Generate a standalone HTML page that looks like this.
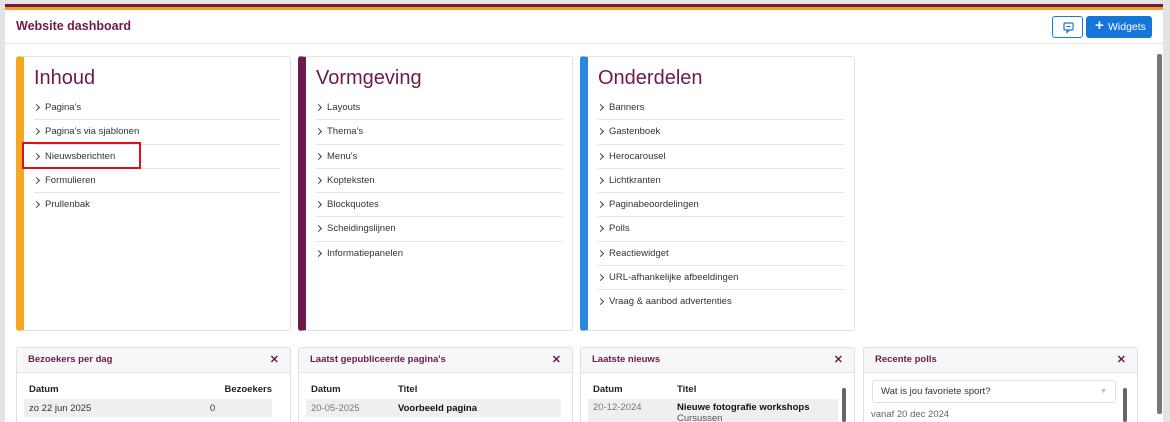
<!DOCTYPE html>
<html style="overflow:hidden;width:1170px;height:422px"><head><style>
*{box-sizing:border-box;margin:0;padding:0}
body{width:1170px;height:422px;overflow:hidden;background:#e4e4e4;font-family:"Liberation Sans",sans-serif;position:relative}
.panel{position:absolute;left:5px;top:4px;width:1158px;height:418px;background:#fff;overflow:hidden}
.s1{position:absolute;left:0;top:0;width:1158px;height:3px;background:#6e1a4a}
.s2{position:absolute;left:0;top:3px;width:1158px;height:3px;background:#f5a020}
.hdr{position:absolute;left:0;top:6px;width:1158px;height:34px;border-bottom:1px solid #e2e2e2}
.hdr h1{position:absolute;left:11px;top:9px;font-size:12.5px;color:#6e1a4a;font-weight:bold}
.b1{position:absolute;left:1047px;top:6px;width:31px;height:22px;border:1px solid #1a7ad9;border-radius:3px;background:#fff}
.b2{position:absolute;left:1081px;top:6px;width:66px;height:22px;border-radius:3px;background:#1476d9;color:#fff;font-size:10.5px;line-height:22px;padding-left:22px}
.b2:before{content:"+";position:absolute;left:9px;top:-1px;font-size:15px;font-weight:bold}
.card{position:absolute;top:56px;width:275px;height:275px;border:1px solid #e2e2e2;border-left:8px solid;border-radius:3px;background:#fff}
.card h2{font-weight:normal;font-size:20px;color:#6e1a4a;margin:10px 0 0 10px;height:29px}
.card ul{list-style:none;margin:0 10px 0 10px}
.card li{font-size:9.5px;color:#333;height:24.3px;line-height:24px;border-bottom:1px solid #e4e4e4;padding-left:11px;position:relative}
.card li:last-child{border-bottom:none}
.card li:before{content:"";position:absolute;left:0;top:9px;width:4px;height:4px;border-right:1px solid #444;border-top:1px solid #444;transform:rotate(45deg)}
.w{position:absolute;top:347px;width:275px;height:75px;border:1px solid #e0e0e0;border-bottom:none;border-radius:3px 3px 0 0;background:#fff;overflow:hidden}
.wh{height:25px;background:#f7f7f7;border-bottom:1px solid #e4e4e4;font-size:9.5px;color:#6e1a4a;font-weight:bold;line-height:24px;padding-left:11px;position:relative}
.wh span{position:absolute;right:11px;top:0;font-size:11px}
table{border-collapse:collapse;margin:7px 0 0 7px;font-size:9.5px;width:248px}
th{text-align:left;font-weight:bold;color:#222;height:19px;padding-left:5px}
td{height:18px;padding-left:5px;color:#333;background:#efefef}
.sb{position:absolute;width:4px;background:#666;border-radius:2px}
</style></head><body>
<div class="panel">
<div class="s1"></div><div class="s2"></div>
<div class="hdr"><h1>Website dashboard</h1>
<div class="b1"><svg width="31" height="22" viewBox="0 0 31 22"><rect x="11" y="6" width="9" height="7" rx="1" fill="none" stroke="#1a7ad9" stroke-width="1.2"/><path d="M14 13 L14 15.5 L16.5 13" fill="none" stroke="#1a7ad9" stroke-width="1.2"/><path d="M13.5 9.5h4" stroke="#1a7ad9"/></svg></div>
<div class="b2">Widgets</div></div>
<div style="position:absolute;left:1152px;top:50px;width:5px;height:360px;background:#777;border-radius:2px"></div>
</div>

<div class="card" style="left:16px;border-left-color:#f5a623"><h2>Inhoud</h2><ul><li>Pagina's</li><li>Pagina's via sjablonen</li><li>Nieuwsberichten</li><li>Formulieren</li><li>Prullenbak</li></ul></div>
<div class="card" style="left:298px;border-left-color:#6e1a4a"><h2>Vormgeving</h2><ul><li>Layouts</li><li>Thema's</li><li>Menu's</li><li>Kopteksten</li><li>Blockquotes</li><li>Scheidingslijnen</li><li>Informatiepanelen</li></ul></div>
<div class="card" style="left:580px;border-left-color:#2a87e0"><h2>Onderdelen</h2><ul><li>Banners</li><li>Gastenboek</li><li>Herocarousel</li><li>Lichtkranten</li><li>Paginabeoordelingen</li><li>Polls</li><li>Reactiewidget</li><li>URL-afhankelijke afbeeldingen</li><li>Vraag &amp; aanbod advertenties</li></ul></div>
<div style="position:absolute;left:22px;top:142px;width:119px;height:27px;border:2px solid #e0101a"></div>

<div class="w" style="left:16px"><div class="wh">Bezoekers per dag<span>✕</span></div>
<table><tr><th>Datum</th><th style="text-align:right;padding-right:0">Bezoekers</th></tr><tr><td>zo 22 jun 2025</td><td style="padding-left:0">&nbsp;&nbsp;&nbsp;&nbsp;&nbsp;&nbsp;&nbsp;&nbsp;&nbsp;&nbsp;&nbsp;&nbsp;&nbsp;&nbsp;&nbsp;&nbsp;&nbsp;&nbsp;&nbsp;&nbsp;&nbsp;&nbsp;0</td></tr></table></div>
<div class="w" style="left:298px"><div class="wh">Laatst gepubliceerde pagina's<span>✕</span></div>
<table style="width:255px"><tr><th style="width:87px">Datum</th><th>Titel</th></tr><tr><td style="color:#777">20-05-2025</td><td style="font-weight:bold;color:#111">Voorbeeld pagina</td></tr></table></div>
<div class="w" style="left:580px"><div class="wh">Laatste nieuws<span>✕</span></div>
<table style="width:250px"><tr><th style="width:84px">Datum</th><th>Titel</th></tr><tr><td style="color:#777;vertical-align:top;padding-top:3px">20-12-2024</td><td style="font-weight:bold;color:#111;height:26px;vertical-align:top;padding-top:3px">Nieuwe fotografie workshops<br><span style="font-weight:normal;color:#555">Cursussen</span></td></tr></table>
<div class="sb" style="left:261px;top:40px;height:34px"></div></div>
<div class="w" style="left:863px"><div class="wh">Recente polls<span>✕</span></div>
<div style="margin:7px 0 0 8px;width:244px;height:23px;border:1px solid #e0e0e0;border-radius:3px;font-size:9.5px;line-height:21px;padding-left:8px;color:#333;position:relative">Wat is jou favoriete sport?<span style="position:absolute;right:8px;top:0;color:#bbb;font-size:7px">▼</span></div>
<div style="margin:6px 0 0 7px;font-size:9.5px;color:#666">vanaf 20 dec 2024</div>
<div class="sb" style="left:259px;top:40px;height:34px"></div></div>
</body></html>
